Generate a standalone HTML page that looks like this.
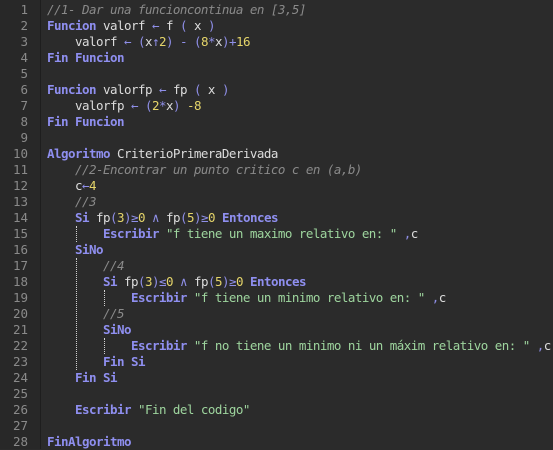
<!DOCTYPE html>
<html><head><meta charset="utf-8"><style>
body{margin:0;width:553px;height:449px;background:#2b2b2b;overflow:hidden;position:relative}
.g{position:absolute;left:0;top:0;width:40px;height:449px;background:#282828;border-right:1px solid #1e1e1e}
.l{position:absolute;left:0;height:16px;line-height:16px;font-family:"DejaVu Sans Mono","Liberation Mono",monospace;font-size:12.5px;letter-spacing:-0.53px;color:#dcdcdc;white-space:pre}
.n{position:absolute;left:0;width:28px;text-align:right;color:#8a8a8a;letter-spacing:0}
.c{position:absolute;left:47px}
.k{color:#8f8ff0;font-weight:bold}
.m{color:#e5d56a}
.s{color:#9ed59e}
.o{color:#8f8fe8}
.cm{color:#8a8a8a;font-style:italic}
.d{position:absolute;border-left:1px dotted #d0d0d0;width:0}
</style></head><body>
<div class="g"></div>
<div class="l" style="top:2px"><span class="n">1</span><span class="c"><span class="cm">//1- Dar una funcioncontinua en [3,5]</span></span></div>
<div class="l" style="top:18px"><span class="n">2</span><span class="c"><span class="k">Funcion</span> valorf <span class="o">←</span> f <span class="o">(</span> x <span class="o">)</span></span></div>
<div class="l" style="top:34px"><span class="n">3</span><span class="c">    valorf <span class="o">←</span> <span class="o">(</span>x<span class="o">↑</span><span class="m">2</span><span class="o">)</span> <span class="o">-</span> <span class="o">(</span><span class="m">8</span><span class="o">*</span>x<span class="o">)+</span><span class="m">16</span></span></div>
<div class="l" style="top:50px"><span class="n">4</span><span class="c"><span class="k">Fin Funcion</span></span></div>
<div class="l" style="top:66px"><span class="n">5</span></div>
<div class="l" style="top:82px"><span class="n">6</span><span class="c"><span class="k">Funcion</span> valorfp <span class="o">←</span> fp <span class="o">(</span> x <span class="o">)</span></span></div>
<div class="l" style="top:98px"><span class="n">7</span><span class="c">    valorfp <span class="o">←</span> <span class="o">(</span><span class="m">2</span><span class="o">*</span>x<span class="o">)</span> <span class="m">-8</span></span></div>
<div class="l" style="top:114px"><span class="n">8</span><span class="c"><span class="k">Fin Funcion</span></span></div>
<div class="l" style="top:130px"><span class="n">9</span></div>
<div class="l" style="top:146px"><span class="n">10</span><span class="c"><span class="k">Algoritmo</span> CriterioPrimeraDerivada</span></div>
<div class="l" style="top:162px"><span class="n">11</span><span class="c">    <span class="cm">//2-Encontrar un punto critico c en (a,b)</span></span></div>
<div class="l" style="top:178px"><span class="n">12</span><span class="c">    c<span class="o">←</span><span class="m">4</span></span></div>
<div class="l" style="top:194px"><span class="n">13</span><span class="c">    <span class="cm">//3</span></span></div>
<div class="l" style="top:210px"><span class="n">14</span><span class="c">    <span class="k">Si</span> fp<span class="o">(</span><span class="m">3</span><span class="o">)≥</span><span class="m">0</span> <span class="o">∧</span> fp<span class="o">(</span><span class="m">5</span><span class="o">)≥</span><span class="m">0</span> <span class="k">Entonces</span></span></div>
<div class="l" style="top:226px"><span class="n">15</span><span class="c">        <span class="k">Escribir</span> <span class="s">"f tiene un maximo relativo en: "</span> <span class="o">,</span>c</span></div>
<div class="l" style="top:242px"><span class="n">16</span><span class="c">    <span class="k">SiNo</span></span></div>
<div class="l" style="top:258px"><span class="n">17</span><span class="c">        <span class="cm">//4</span></span></div>
<div class="l" style="top:274px"><span class="n">18</span><span class="c">        <span class="k">Si</span> fp<span class="o">(</span><span class="m">3</span><span class="o">)≤</span><span class="m">0</span> <span class="o">∧</span> fp<span class="o">(</span><span class="m">5</span><span class="o">)≥</span><span class="m">0</span> <span class="k">Entonces</span></span></div>
<div class="l" style="top:290px"><span class="n">19</span><span class="c">            <span class="k">Escribir</span> <span class="s">"f tiene un minimo relativo en: "</span> <span class="o">,</span>c</span></div>
<div class="l" style="top:306px"><span class="n">20</span><span class="c">        <span class="cm">//5</span></span></div>
<div class="l" style="top:322px"><span class="n">21</span><span class="c">        <span class="k">SiNo</span></span></div>
<div class="l" style="top:338px"><span class="n">22</span><span class="c">            <span class="k">Escribir</span> <span class="s">"f no tiene un minimo ni un máxim relativo en: "</span> <span class="o">,</span>c</span></div>
<div class="l" style="top:354px"><span class="n">23</span><span class="c">        <span class="k">Fin Si</span></span></div>
<div class="l" style="top:370px"><span class="n">24</span><span class="c">    <span class="k">Fin Si</span></span></div>
<div class="l" style="top:386px"><span class="n">25</span></div>
<div class="l" style="top:402px"><span class="n">26</span><span class="c">    <span class="k">Escribir</span> <span class="s">"Fin del codigo"</span></span></div>
<div class="l" style="top:418px"><span class="n">27</span></div>
<div class="l" style="top:434px"><span class="n">28</span><span class="c"><span class="k">FinAlgoritmo</span></span></div>
<div class="d" style="left:76px;top:226px;height:16px"></div>
<div class="d" style="left:76px;top:258px;height:112px"></div>
<div class="d" style="left:104px;top:290px;height:16px"></div>
<div class="d" style="left:104px;top:338px;height:16px"></div>
</body></html>
